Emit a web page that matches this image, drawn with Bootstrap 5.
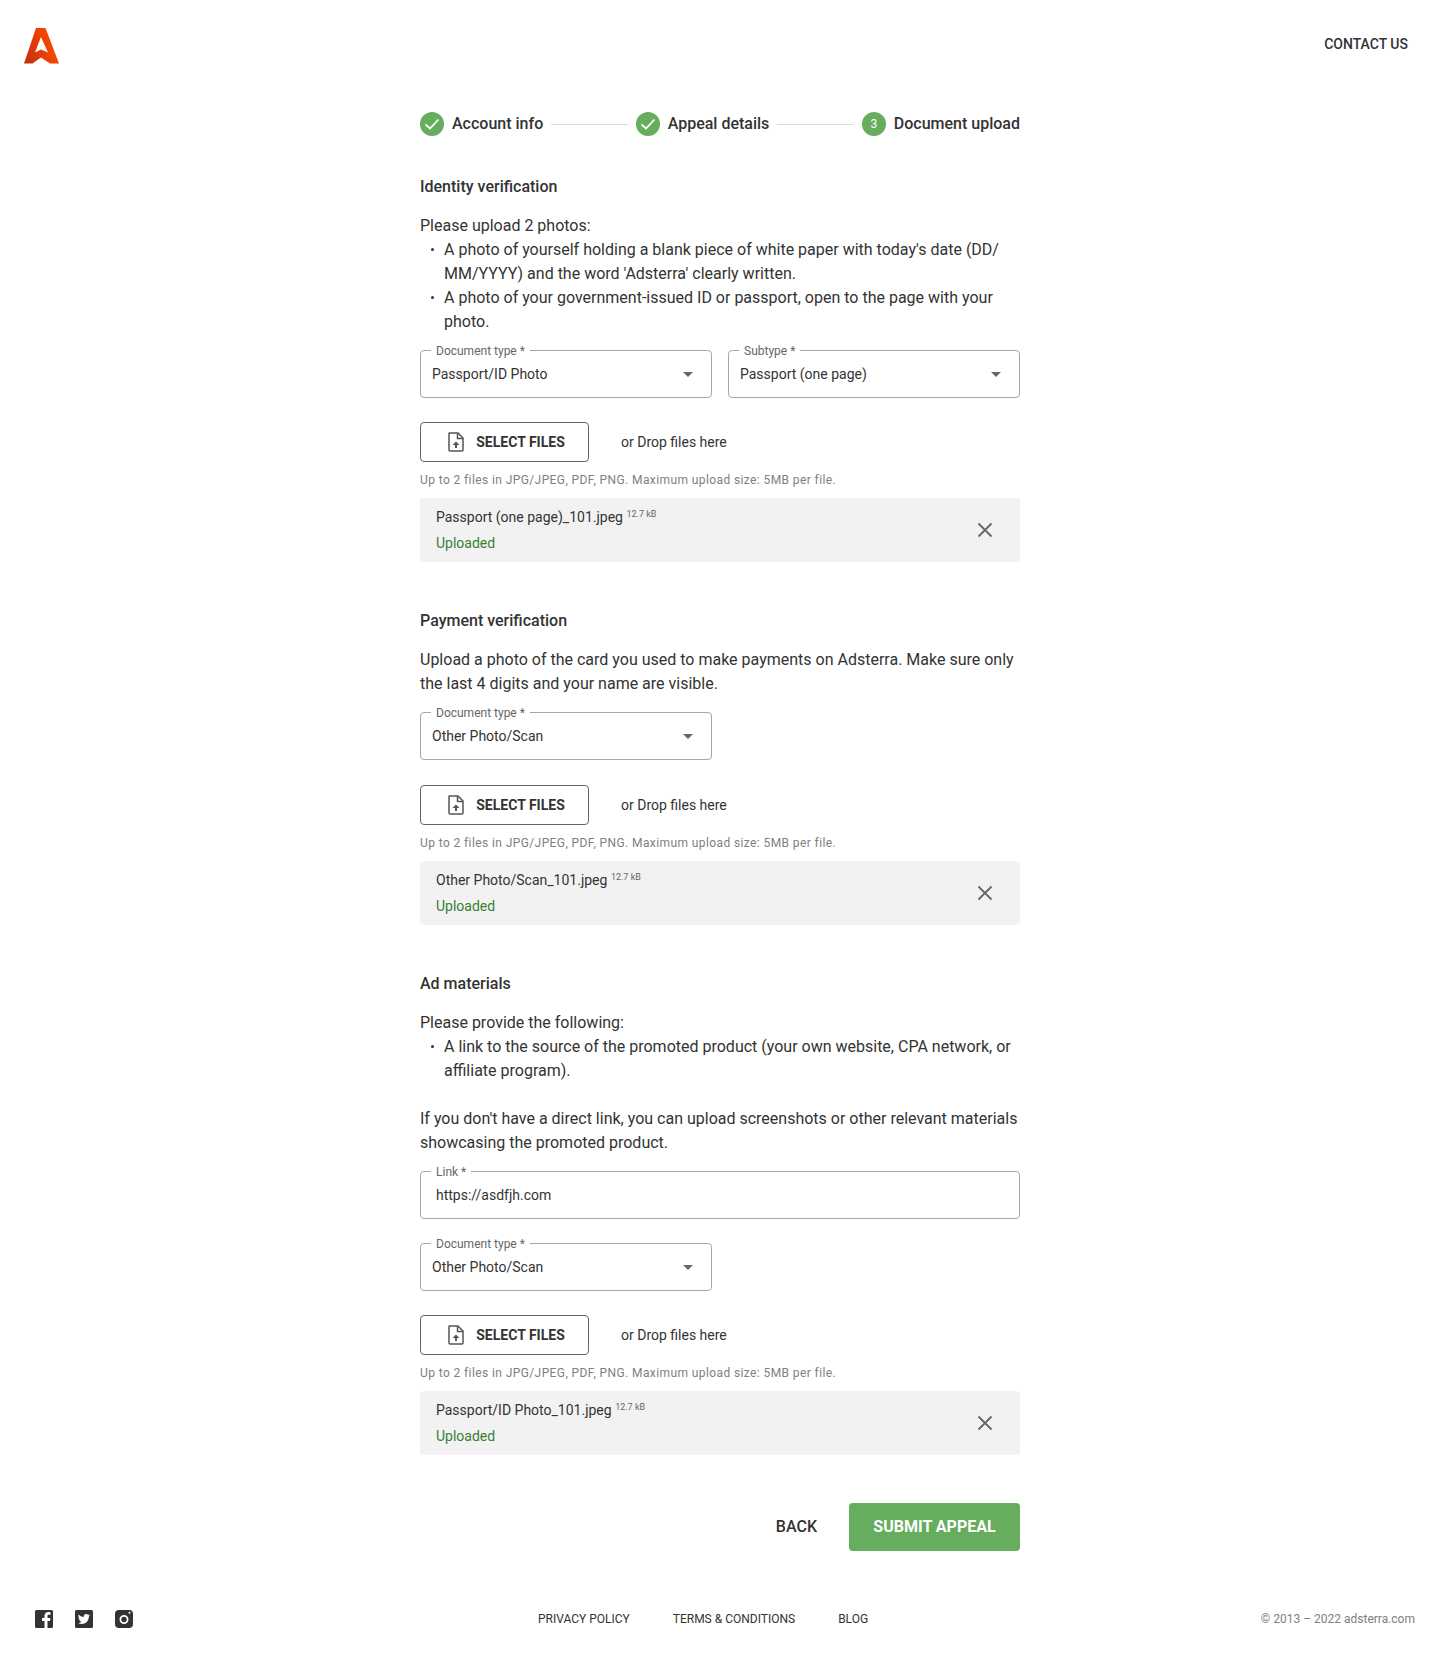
<!DOCTYPE html>
<html lang="en">
  <head>
    <meta charset="UTF-8" />
    <meta name="viewport" content="width=device-width, initial-scale=1.0" />
    <title>Appeal - Document upload</title>
    <link href="https://cdn.jsdelivr.net/npm/bootstrap@5.3.2/dist/css/bootstrap.min.css" rel="stylesheet">
    <style>
      body {
        font-family: Roboto, "Liberation Sans", sans-serif;
        font-size: 16px;
        line-height: 24px;
        color: #333;
        background: #fff;
      }

      /* header */
      .top-bar {
        height: 88px;
        padding: 28px 32px 0 24px;
      }
      .contact-link {
        font-size: 14px;
        line-height: 20px;
        font-weight: 500;
        color: #333;
        text-decoration: none;
        margin-top: 6px;
      }

      .form-column {
        width: 600px;
        margin: 24px auto 0;
      }

      /* stepper */
      .step-dot {
        width: 24px;
        height: 24px;
        border-radius: 50%;
        background: #66ad5e;
        color: #fff;
        font-size: 12px;
        flex: none;
      }
      .step-name {
        margin-left: 8px;
        font-weight: 500;
        white-space: nowrap;
      }
      .step-line {
        flex: 1 1 auto;
        height: 1px;
        background: #dcdcdc;
        margin: 0 8px;
      }

      .block-title {
        font-weight: 500;
        margin: 0 0 15px;
        font-size: 16px;
        line-height: 24px;
      }
      .upload-block {
        margin-top: 47px;
      }
      .upload-block.is-first {
        margin-top: 39px;
      }
      .copy-text {
        margin: 0;
      }
      .dot-list {
        list-style: none;
        padding: 0 0 0 24px;
        margin: 0;
      }
      .dot-list li {
        position: relative;
      }
      .dot-list li::before {
        content: "";
        position: absolute;
        left: -13px;
        top: 10px;
        width: 3px;
        height: 3px;
        border-radius: 50%;
        background: #333;
      }

      /* outlined fields */
      .field-row {
        margin-top: 16px;
      }
      .field-half {
        width: 292px;
      }
      .field-wrap {
        position: relative;
      }
      .field-label {
        position: absolute;
        left: 11px;
        top: -8px;
        padding: 0 5px;
        background: #fff;
        font-size: 12px;
        line-height: 18px;
        color: #666;
      }
      .field-wrap .form-select,
      .field-wrap .form-control {
        height: 48px;
        border: 1px solid #a6a6a6;
        border-radius: 4px;
        font-size: 14px;
        line-height: 20px;
        color: #333;
        box-shadow: none;
      }
      .field-wrap .form-select {
        padding: 0 40px 0 11px;
        background-image: url("data:image/svg+xml,%3Csvg xmlns='http://www.w3.org/2000/svg' width='10' height='5'%3E%3Cpath d='M0 0h10L5 5z' fill='%23666'/%3E%3C/svg%3E");
        background-size: 10px 5px;
        background-position: right 18px center;
      }
      .field-wrap .form-control {
        padding: 0 15px;
      }

      /* upload row */
      .upload-row {
        margin-top: 24px;
      }
      .upload-row.is-lower {
        margin-top: 25px;
      }
      .select-btn {
        width: 169px;
        height: 40px;
        border: 1px solid #666;
        border-radius: 4px;
        background: #fff;
        color: #333;
        font-size: 14px;
        font-weight: 700;
        padding: 0 0 0 3px;
      }
      .select-btn:hover {
        background: #fff;
        border-color: #666;
        color: #333;
      }
      .select-btn svg {
        margin-right: 11px;
      }
      .drop-hint {
        margin-left: 32px;
        font-size: 14px;
      }
      .limit-note {
        margin: 9px 0 9px;
        font-size: 12px;
        line-height: 18px;
        letter-spacing: .4px;
        color: #808080;
      }
      .file-box {
        height: 64px;
        background: #f2f2f2;
        border-radius: 4px;
        padding: 0 26px 0 16px;
      }
      .file-name {
        font-size: 14px;
        line-height: 26px;
      }
      .file-size {
        font-size: 9px;
        color: #666;
        vertical-align: 5px;
        line-height: 0;
      }
      .file-status {
        font-size: 14px;
        line-height: 26px;
        color: #3b7f33;
      }
      .remove-btn {
        background: none;
        border: 0;
        padding: 0;
        line-height: 0;
      }

      /* form actions */
      .form-actions {
        margin-top: 48px;
      }
      .back-btn {
        font-size: 16px;
        font-weight: 500;
        color: #333;
        padding: 0;
        margin-right: 32px;
        border: 0;
      }
      .submit-btn {
        width: 171px;
        height: 48px;
        background: #66ad5e;
        border: 0;
        border-radius: 4px;
        color: #fff;
        font-size: 16px;
        font-weight: 700;
        padding: 0;
      }
      .submit-btn:hover {
        background: #66ad5e;
        color: #fff;
      }

      /* footer */
      .page-foot {
        position: relative;
        height: 111px;
        padding: 59px 25px 0 35px;
      }
      .social-set {
        gap: 22px;
      }
      .foot-links {
        position: absolute;
        left: 538px;
        top: 59px;
        gap: 43px;
      }
      .foot-links a {
        font-size: 12px;
        line-height: 18px;
        color: #333;
        text-decoration: none;
      }
      .foot-copy {
        font-size: 12px;
        line-height: 18px;
        color: #808080;
      }
    </style>
  </head>
  <body>
    <header class="top-bar d-flex justify-content-between align-items-start">
      <svg width="36" height="36" viewBox="0 0 36 36" aria-label="Adsterra">
        <defs>
          <linearGradient id="logoFill" x1="0" y1="1" x2="1" y2="0.6">
            <stop offset="0" stop-color="#c2300f" />
            <stop offset="1" stop-color="#ff4a00" />
          </linearGradient>
        </defs>
        <path fill="url(#logoFill)" fill-rule="evenodd" d="M12 0H21.500L35 35.500H26L17 29.500L8.500 35.500H0ZM17 9L11 24.500L17 21.500L24 24.500Z" />
      </svg>
      <a href="#" class="contact-link">CONTACT US</a>
    </header>

    <main class="form-column">
      <div class="d-flex align-items-center">
        <span class="step-dot d-flex align-items-center justify-content-center">
          <svg width="18" height="18" viewBox="0 0 18 18"><path d="M2.500 9.500L7 13.500L15.500 4.500" fill="none" stroke="#fff" stroke-width="1.800" /></svg>
        </span>
        <span class="step-name">Account info</span>
        <span class="step-line"></span>
        <span class="step-dot d-flex align-items-center justify-content-center">
          <svg width="18" height="18" viewBox="0 0 18 18"><path d="M2.500 9.500L7 13.500L15.500 4.500" fill="none" stroke="#fff" stroke-width="1.800" /></svg>
        </span>
        <span class="step-name">Appeal details</span>
        <span class="step-line"></span>
        <span class="step-dot d-flex align-items-center justify-content-center">3</span>
        <span class="step-name">Document upload</span>
      </div>

      <!-- Identity -->
      <section class="upload-block is-first">
        <h2 class="block-title">Identity verification</h2>
        <p class="copy-text">Please upload 2 photos:</p>
        <ul class="dot-list">
          <li>A photo of yourself holding a blank piece of white paper with today's date (DD/<wbr>MM/YYYY) and the word 'Adsterra' clearly written.</li>
          <li>A photo of your government-issued ID or passport, open to the page with your photo.</li>
        </ul>
        <div class="field-row d-flex gap-3">
          <div class="field-wrap field-half">
            <label class="field-label">Document type *</label>
            <select class="form-select"><option>Passport/ID Photo</option></select>
          </div>
          <div class="field-wrap field-half">
            <label class="field-label">Subtype *</label>
            <select class="form-select"><option>Passport (one page)</option></select>
          </div>
        </div>
        <div class="upload-row d-flex align-items-center">
          <button type="button" class="btn select-btn d-flex align-items-center justify-content-center">
            <svg width="18" height="20" viewBox="0 0 18 20"><path d="M2.500 1H11L16 6V18A1 1 0 0 1 15 19H3A1 1 0 0 1 2 18V1.500A.5 .5 0 0 1 2.500 1Z" fill="none" stroke="#555" stroke-width="1.500" /><path d="M10.500 1V6.500H16" fill="none" stroke="#555" stroke-width="1.500" /><path d="M9 9.500L12.500 13H10V16H8V13H5.500Z" fill="#555" /></svg>
            SELECT FILES
          </button>
          <span class="drop-hint">or Drop files here</span>
        </div>
        <p class="limit-note">Up to 2 files in JPG/JPEG, PDF, PNG. Maximum upload size: 5MB per file.</p>
        <div class="file-box d-flex justify-content-between align-items-center">
          <div>
            <div class="file-name">Passport (one page)_101.jpeg <span class="file-size">12.7 kB</span></div>
            <div class="file-status">Uploaded</div>
          </div>
          <button type="button" class="remove-btn" aria-label="Remove">
            <svg width="18" height="18" viewBox="0 0 18 18"><path d="M2.500 2.500L15.500 15.500M15.500 2.500L2.500 15.500" stroke="#666" stroke-width="1.800" /></svg>
          </button>
        </div>
      </section>

      <!-- Payment -->
      <section class="upload-block">
        <h2 class="block-title">Payment verification</h2>
        <p class="copy-text">Upload a photo of the card you used to make payments on Adsterra. Make sure only the last 4 digits and your name are visible.</p>
        <div class="field-row d-flex gap-3">
          <div class="field-wrap field-half">
            <label class="field-label">Document type *</label>
            <select class="form-select"><option>Other Photo/Scan</option></select>
          </div>
        </div>
        <div class="upload-row is-lower d-flex align-items-center">
          <button type="button" class="btn select-btn d-flex align-items-center justify-content-center">
            <svg width="18" height="20" viewBox="0 0 18 20"><path d="M2.500 1H11L16 6V18A1 1 0 0 1 15 19H3A1 1 0 0 1 2 18V1.500A.5 .5 0 0 1 2.500 1Z" fill="none" stroke="#555" stroke-width="1.500" /><path d="M10.500 1V6.500H16" fill="none" stroke="#555" stroke-width="1.500" /><path d="M9 9.500L12.500 13H10V16H8V13H5.500Z" fill="#555" /></svg>
            SELECT FILES
          </button>
          <span class="drop-hint">or Drop files here</span>
        </div>
        <p class="limit-note">Up to 2 files in JPG/JPEG, PDF, PNG. Maximum upload size: 5MB per file.</p>
        <div class="file-box d-flex justify-content-between align-items-center">
          <div>
            <div class="file-name">Other Photo/Scan_101.jpeg <span class="file-size">12.7 kB</span></div>
            <div class="file-status">Uploaded</div>
          </div>
          <button type="button" class="remove-btn" aria-label="Remove">
            <svg width="18" height="18" viewBox="0 0 18 18"><path d="M2.500 2.500L15.500 15.500M15.500 2.500L2.500 15.500" stroke="#666" stroke-width="1.800" /></svg>
          </button>
        </div>
      </section>

      <!-- Ad materials -->
      <section class="upload-block">
        <h2 class="block-title">Ad materials</h2>
        <p class="copy-text">Please provide the following:</p>
        <ul class="dot-list">
          <li>A link to the source of the promoted product (your own website, CPA network, or affiliate program).</li>
        </ul>
        <p class="copy-text mt-4">If you don't have a direct link, you can upload screenshots or other relevant materials showcasing the promoted product.</p>
        <div class="field-row">
          <div class="field-wrap">
            <label class="field-label">Link *</label>
            <input type="text" class="form-control" value="https://asdfjh.com" />
          </div>
        </div>
        <div class="upload-row d-flex">
          <div class="field-wrap field-half">
            <label class="field-label">Document type *</label>
            <select class="form-select"><option>Other Photo/Scan</option></select>
          </div>
        </div>
        <div class="upload-row d-flex align-items-center">
          <button type="button" class="btn select-btn d-flex align-items-center justify-content-center">
            <svg width="18" height="20" viewBox="0 0 18 20"><path d="M2.500 1H11L16 6V18A1 1 0 0 1 15 19H3A1 1 0 0 1 2 18V1.500A.5 .5 0 0 1 2.500 1Z" fill="none" stroke="#555" stroke-width="1.500" /><path d="M10.500 1V6.500H16" fill="none" stroke="#555" stroke-width="1.500" /><path d="M9 9.500L12.500 13H10V16H8V13H5.500Z" fill="#555" /></svg>
            SELECT FILES
          </button>
          <span class="drop-hint">or Drop files here</span>
        </div>
        <p class="limit-note">Up to 2 files in JPG/JPEG, PDF, PNG. Maximum upload size: 5MB per file.</p>
        <div class="file-box d-flex justify-content-between align-items-center">
          <div>
            <div class="file-name">Passport/ID Photo_101.jpeg <span class="file-size">12.7 kB</span></div>
            <div class="file-status">Uploaded</div>
          </div>
          <button type="button" class="remove-btn" aria-label="Remove">
            <svg width="18" height="18" viewBox="0 0 18 18"><path d="M2.500 2.500L15.500 15.500M15.500 2.500L2.500 15.500" stroke="#666" stroke-width="1.800" /></svg>
          </button>
        </div>
      </section>

      <div class="form-actions d-flex justify-content-end align-items-center">
        <button type="button" class="btn back-btn">BACK</button>
        <button type="button" class="btn submit-btn">SUBMIT APPEAL</button>
      </div>
    </main>

    <footer class="page-foot d-flex justify-content-between align-items-start">
      <div class="social-set d-flex">
        <svg width="18" height="18" viewBox="0 0 18 18" aria-label="Facebook"><path fill="#333" d="M1.500 0H16.500A1.500 1.500 0 0 1 18 1.500V16.500A1.500 1.500 0 0 1 16.500 18H12.500V11H15L15.400 8H12.500V6.200C12.500 5.300 12.800 4.800 13.900 4.800H15.500V2.200C15.100 2.100 14.300 2 13.300 2C11.100 2 9.500 3.400 9.500 5.900V8H7V11H9.500V18H1.500A1.500 1.500 0 0 1 0 16.500V1.500A1.500 1.500 0 0 1 1.500 0Z" /></svg>
        <svg width="18" height="18" viewBox="0 0 18 18" aria-label="Twitter"><rect width="18" height="18" rx="1.500" fill="#333" /><path fill="#fff" d="M15 5.200C14.500 5.400 14 5.600 13.500 5.600C14 5.300 14.400 4.800 14.600 4.200C14.100 4.500 13.600 4.700 13 4.800C12.500 4.300 11.900 4 11.200 4C9.800 4 8.700 5.100 8.700 6.500C8.700 6.700 8.700 6.900 8.800 7.100C6.700 7 4.900 6 3.700 4.500C3.500 4.900 3.400 5.300 3.400 5.800C3.400 6.700 3.800 7.400 4.500 7.900C4.100 7.900 3.700 7.800 3.400 7.600C3.400 8.800 4.300 9.900 5.400 10.100C5 10.200 4.600 10.200 4.300 10.100C4.600 11.100 5.500 11.800 6.600 11.800C5.500 12.700 4.200 13.100 3 13C4.100 13.700 5.400 14 6.800 14C11.300 14 13.800 10.200 13.800 7C13.800 6.900 13.800 6.800 13.800 6.700C14.300 6.300 14.700 5.800 15 5.200Z" /></svg>
        <svg width="18" height="18" viewBox="0 0 18 18" aria-label="Instagram"><rect width="18" height="18" rx="4" fill="#333" /><circle cx="9" cy="9.500" r="3.600" fill="none" stroke="#fff" stroke-width="1.800" /><circle cx="14.500" cy="2.800" r="1" fill="#fff" /></svg>
      </div>
      <nav class="foot-links d-flex">
        <a href="#">PRIVACY POLICY</a>
        <a href="#">TERMS &amp; CONDITIONS</a>
        <a href="#">BLOG</a>
      </nav>
      <span class="foot-copy">© 2013 – 2022 adsterra.com</span>
    </footer>

    <script src="https://cdn.jsdelivr.net/npm/bootstrap@5.3.2/dist/js/bootstrap.bundle.min.js"></script>
  </body>
</html>
